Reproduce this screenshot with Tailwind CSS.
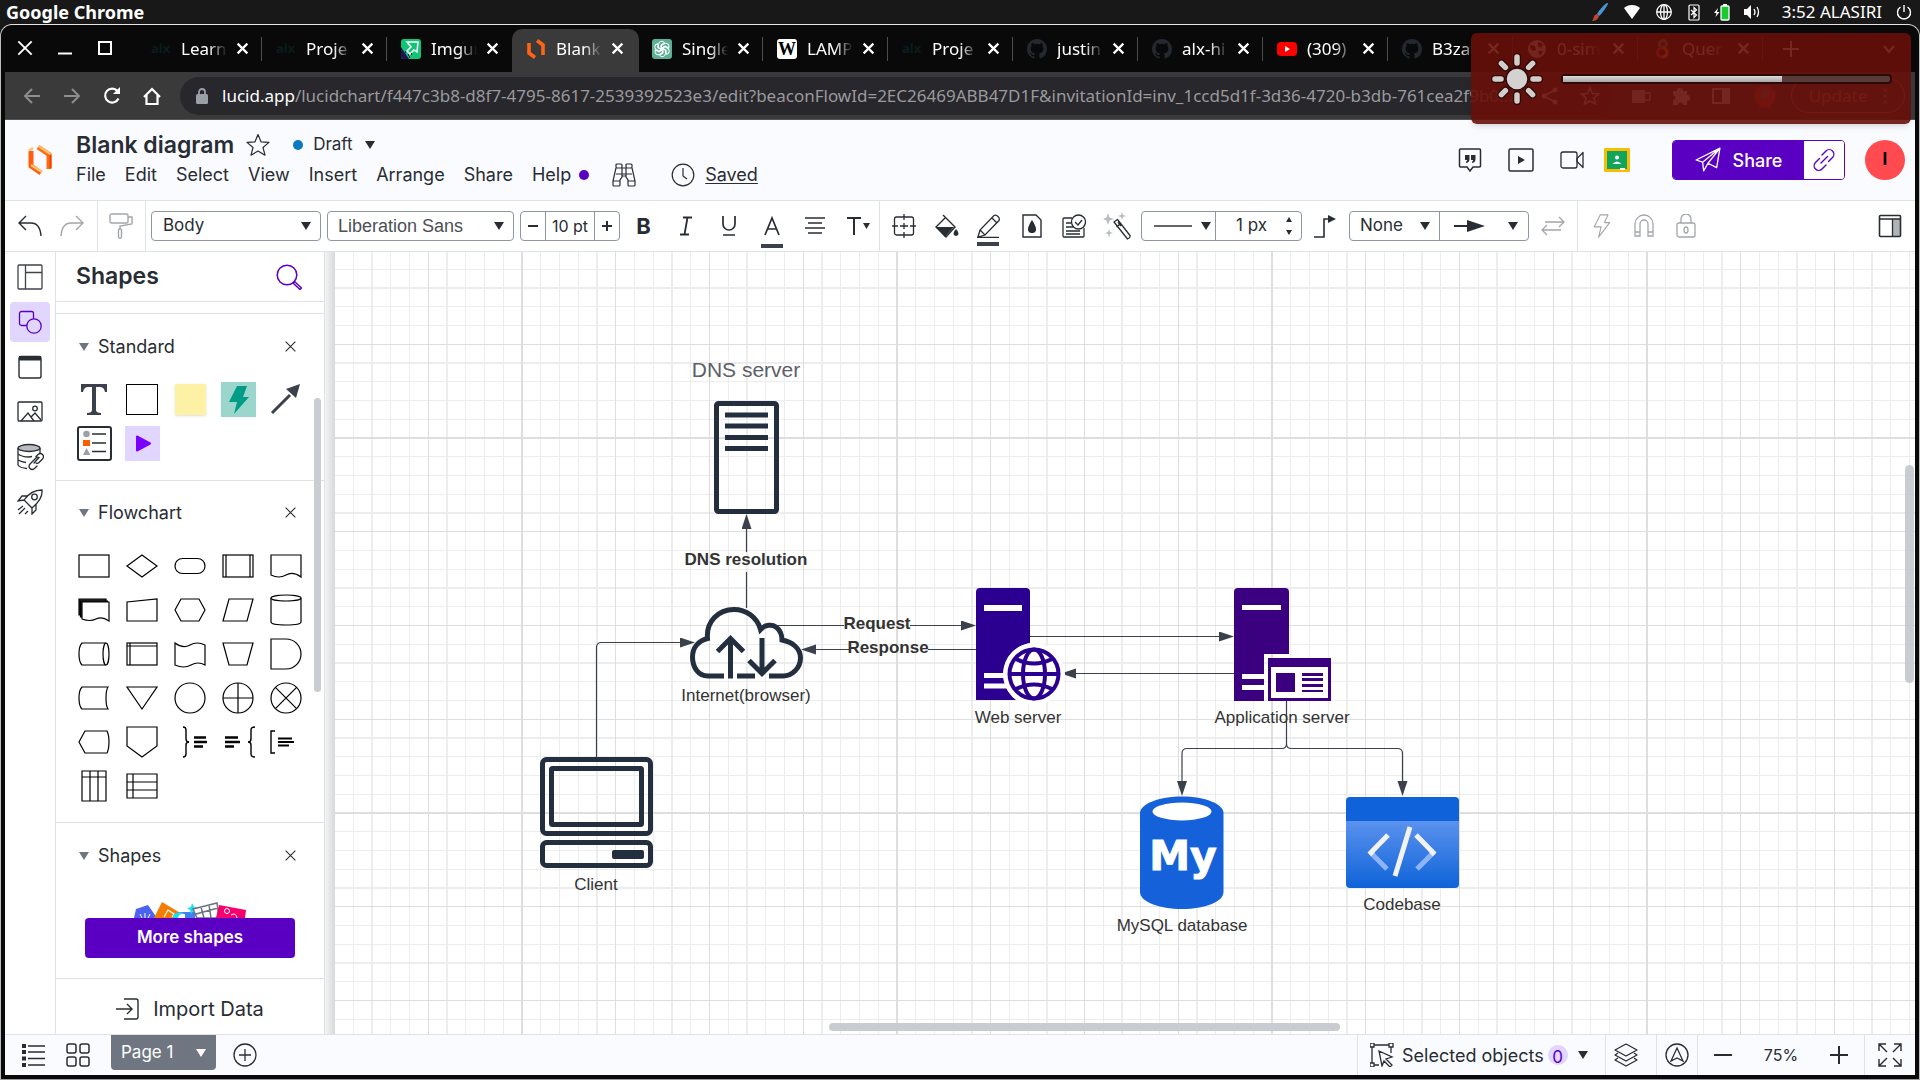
<!DOCTYPE html>
<html lang="en">
<head>
<meta charset="utf-8">
<title>Blank diagram: Lucidchart</title>
<script src="https://cdn.jsdelivr.net/npm/@tailwindcss/browser@4"></script>
</head>
<body class="h-screen overflow-hidden bg-[#181818] font-['Inter',sans-serif] text-[#282c33]">
<svg class="hidden" aria-hidden="true">
  <defs>
    <symbol id="x" viewBox="0 0 12 12"><path d="M1.5 1.5l9 9M10.5 1.5l-9 9" fill="none" stroke="currentColor"/></symbol>
    <symbol id="caret" viewBox="0 0 10 8"><path d="M0 0h10L5 8z" fill="currentColor"/></symbol>
    <symbol id="github" viewBox="0 0 16 16"><path fill="currentColor" d="M8 0C3.58 0 0 3.58 0 8c0 3.54 2.29 6.53 5.47 7.59.4.07.55-.17.55-.38 0-.19-.01-.82-.01-1.49-2.01.37-2.53-.49-2.69-.94-.09-.23-.48-.94-.82-1.13-.28-.15-.68-.52-.01-.53.63-.01 1.08.58 1.23.82.72 1.21 1.87.87 2.33.66.07-.52.28-.87.51-1.07-1.78-.2-3.64-.89-3.64-3.95 0-.87.31-1.59.82-2.15-.08-.2-.36-1.02.08-2.12 0 0 .67-.21 2.2.82a7.6 7.6 0 014 0c1.53-1.04 2.2-.82 2.2-.82.44 1.1.16 1.92.08 2.12.51.56.82 1.27.82 2.15 0 3.07-1.87 3.75-3.65 3.95.29.25.54.73.54 1.48 0 1.07-.01 1.93-.01 2.2 0 .21.15.46.55.38A8 8 0 0016 8c0-4.42-3.58-8-8-8z"/></symbol>
    <symbol id="bolt" viewBox="0 0 20 28"><path d="M8 1h9l-4 9h6L6 27l3-12H1z" fill="none" stroke="currentColor" stroke-linejoin="round" stroke-width="1.3"/></symbol>
  </defs>
</svg>

<div class="flex h-screen flex-col">
  <!-- desktop bar -->
  <header class="flex h-6 shrink-0 items-center justify-between bg-[#181818] px-[6px] font-['Noto_Sans',sans-serif] text-white">
    <span class="text-[18px] leading-6 font-bold">Google Chrome</span>
    <div class="flex items-center gap-3">
      <svg class="h-5 w-5" viewBox="0 0 20 20"><path d="M18 1c1 1-7 12-9 13l-2-2C9 8 16 0 18 1z" fill="#4a94d6"/><path d="M7 12l2 2c-1 4-4 5-7 5 2-2 1-6 5-7z" fill="#c2452f"/></svg>
      <svg class="h-5 w-5" viewBox="0 0 20 20"><path d="M10 17L2 6c4-4 12-4 16 0z" fill="#fff"/></svg>
      <svg class="h-5 w-5" viewBox="0 0 20 20" fill="none" stroke="#fff" stroke-width="1.3"><circle cx="10" cy="10" r="7.3"/><ellipse cx="10" cy="10" rx="3.5" ry="7.3"/><path d="M3 10h14M10 3v14"/></svg>
      <svg class="h-5 w-4" viewBox="0 0 16 20" fill="none" stroke="#fff" stroke-width="1.2"><rect x="3" y="3" width="10" height="15" rx="1"/><path d="M5 8l5.500 5L8 15.500v-10L10.500 8 5 13"/></svg>
      <svg class="h-5 w-4" viewBox="2 0 16 20"><rect x="9" y="4" width="8" height="14" rx="1" fill="#1bcb2e" stroke="#fff" stroke-width="1.3"/><path d="M11 2h4v2h-4z" fill="#fff"/><path d="M6 6l-4 5h2.500l-1 4 4-5H5z" fill="#fff"/></svg>
      <svg class="h-5 w-5" viewBox="0 0 20 20"><path d="M2 7h3l4-4v14l-4-4H2z" fill="#fff"/><path d="M12 7q2 3 0 6M15 5q3 5 0 10" fill="none" stroke="#fff" stroke-width="1.300"/></svg>
      <time class="pl-2 text-[17px] leading-6">3:52 ALASIRI</time>
      <svg class="h-5 w-5" viewBox="0 0 20 20" fill="none" stroke="#fff" stroke-width="1.4"><path d="M6.500 5a6.500 6.500 0 107 0M10 3v7"/></svg>
    </div>
  </header>

  <div class="relative flex min-h-0 flex-1 flex-col rounded-t-xl border-x border-t border-b border-t-[#e4e4e4] border-x-[#bdbdbd] border-b-[#9a9a9a] bg-[#090909]">
    <!-- tab strip -->
    <div class="flex h-[47px] shrink-0 items-stretch overflow-hidden font-['Noto_Sans',sans-serif] text-[17px] text-white">
      <div class="flex w-[136px] shrink-0 items-center gap-5 pb-[2px] pl-[14px]">
        <button aria-label="Close" class="grid h-5 w-5 place-items-center"><svg class="h-4 w-4" viewBox="0 0 12 12" fill="none" stroke="#fff" stroke-width="1.4"><path d="M1 1l10 10M11 1L1 11"/></svg></button>
        <button aria-label="Minimize" class="grid h-5 w-5 place-items-center"><svg class="h-4 w-4" viewBox="0 0 16 16"><path d="M1 13.500h14" stroke="#fff" stroke-width="2"/></svg></button>
        <button aria-label="Maximize" class="grid h-5 w-5 place-items-center"><svg class="h-4 w-4" viewBox="0 0 16 16"><rect x="2" y="2" width="12" height="12" fill="none" stroke="#fff" stroke-width="2"/></svg></button>
      </div>
      <div class="relative flex w-[125px] shrink-0 items-center pl-[14px]"><span class="w-5 text-[13px] font-bold text-[#0b1c1e]">alx</span><span class="ml-[10px] w-[46px] overflow-hidden whitespace-nowrap [mask-image:linear-gradient(90deg,#000_60%,transparent)]">Learn</span><button aria-label="Close tab" class="ml-[9px]"><svg class="h-[13px] w-[13px]" stroke-width="2"><use href="#x"/></svg></button><span class="absolute right-0 h-6 w-px bg-[#4c4c4c]"></span></div>
      <div class="relative flex w-[125px] shrink-0 items-center pl-[14px]"><span class="w-5 text-[13px] font-bold text-[#0b1c1e]">alx</span><span class="ml-[10px] w-[46px] overflow-hidden whitespace-nowrap [mask-image:linear-gradient(90deg,#000_60%,transparent)]">Proje</span><button aria-label="Close tab" class="ml-[9px]"><svg class="h-[13px] w-[13px]" stroke-width="2"><use href="#x"/></svg></button><span class="absolute right-0 h-6 w-px bg-[#4c4c4c]"></span></div>
      <div class="flex w-[125px] shrink-0 items-center pl-[14px]"><svg class="h-5 w-5" viewBox="0 0 20 20"><rect width="20" height="20" rx="3" fill="#12c576"/><path d="M0 8l8 12H3q-3 0-3-3z" fill="#1d1452"/><path d="M6 3l11 0-1 10-3-2-4 4-3-3 4-4z" fill="#12c576" stroke="#fff" stroke-width="1.500"/><path d="M4 13h1m2 3h1m2-1h1m-3 3h1" stroke="#1d1452" stroke-width="2"/></svg><span class="ml-[10px] w-[46px] overflow-hidden whitespace-nowrap [mask-image:linear-gradient(90deg,#000_60%,transparent)]">Imgur</span><button aria-label="Close tab" class="ml-[9px]"><svg class="h-[13px] w-[13px]" stroke-width="2"><use href="#x"/></svg></button></div>
      <div class="mt-1 flex w-[127px] shrink-0 items-center rounded-t-[10px] bg-[#3a3a3a] pb-1 pl-[14px]"><svg class="h-5 w-5" viewBox="0 0 20 20" fill="none" stroke="#ff6414" stroke-width="3.600"><path d="M3 4v10l6 4.500M11 1.500L17 6v10"/></svg><span class="ml-[10px] w-[46px] overflow-hidden whitespace-nowrap [mask-image:linear-gradient(90deg,#000_60%,transparent)]">Blank</span><button aria-label="Close tab" class="ml-[9px]"><svg class="h-[13px] w-[13px]" stroke-width="2"><use href="#x"/></svg></button></div>
      <div class="relative flex w-[124px] shrink-0 items-center pl-[13px]"><svg class="h-5 w-5" viewBox="0 0 20 20" fill="none" stroke="#fff" stroke-width="1"><rect width="20" height="20" rx="3" fill="#5faf97" stroke="none"/><g id="petal"><path id="pt" d="M10 10.500L6.500 8.500V5.500a3.300 3.300 0 016-1.800L9 5.800v4"/><use href="#pt" transform="rotate(60 10 10)"/><use href="#pt" transform="rotate(120 10 10)"/><use href="#pt" transform="rotate(180 10 10)"/><use href="#pt" transform="rotate(240 10 10)"/><use href="#pt" transform="rotate(300 10 10)"/></g></svg><span class="ml-[10px] w-[46px] overflow-hidden whitespace-nowrap [mask-image:linear-gradient(90deg,#000_60%,transparent)]">Single</span><button aria-label="Close tab" class="ml-[9px]"><svg class="h-[13px] w-[13px]" stroke-width="2"><use href="#x"/></svg></button><span class="absolute right-0 h-6 w-px bg-[#4c4c4c]"></span></div>
      <div class="relative flex w-[125px] shrink-0 items-center pl-[14px]"><span class="grid h-5 w-5 place-items-center rounded-[3px] bg-white font-['Liberation_Serif',serif] text-[18px] leading-5 font-bold text-black">W</span><span class="ml-[10px] w-[46px] overflow-hidden whitespace-nowrap [mask-image:linear-gradient(90deg,#000_60%,transparent)]">LAMP</span><button aria-label="Close tab" class="ml-[9px]"><svg class="h-[13px] w-[13px]" stroke-width="2"><use href="#x"/></svg></button><span class="absolute right-0 h-6 w-px bg-[#4c4c4c]"></span></div>
      <div class="relative flex w-[125px] shrink-0 items-center pl-[14px]"><span class="w-5 text-[13px] font-bold text-[#0b1c1e]">alx</span><span class="ml-[10px] w-[46px] overflow-hidden whitespace-nowrap [mask-image:linear-gradient(90deg,#000_60%,transparent)]">Proje</span><button aria-label="Close tab" class="ml-[9px]"><svg class="h-[13px] w-[13px]" stroke-width="2"><use href="#x"/></svg></button><span class="absolute right-0 h-6 w-px bg-[#4c4c4c]"></span></div>
      <div class="relative flex w-[125px] shrink-0 items-center pl-[14px]"><svg class="h-5 w-5 text-[#24292f]"><use href="#github"/></svg><span class="ml-[10px] w-[46px] overflow-hidden whitespace-nowrap [mask-image:linear-gradient(90deg,#000_60%,transparent)]">justin</span><button aria-label="Close tab" class="ml-[9px]"><svg class="h-[13px] w-[13px]" stroke-width="2"><use href="#x"/></svg></button><span class="absolute right-0 h-6 w-px bg-[#4c4c4c]"></span></div>
      <div class="relative flex w-[125px] shrink-0 items-center pl-[14px]"><svg class="h-5 w-5 text-[#24292f]"><use href="#github"/></svg><span class="ml-[10px] w-[46px] overflow-hidden whitespace-nowrap [mask-image:linear-gradient(90deg,#000_60%,transparent)]">alx-hi</span><button aria-label="Close tab" class="ml-[9px]"><svg class="h-[13px] w-[13px]" stroke-width="2"><use href="#x"/></svg></button><span class="absolute right-0 h-6 w-px bg-[#4c4c4c]"></span></div>
      <div class="relative flex w-[125px] shrink-0 items-center pl-[14px]"><svg class="h-5 w-5" viewBox="0 0 20 20"><rect y="3" width="20" height="14" rx="4" fill="#f00"/><path d="M8 7l5 3-5 3z" fill="#fff"/></svg><span class="ml-[10px] w-[46px] overflow-hidden whitespace-nowrap [mask-image:linear-gradient(90deg,#000_60%,transparent)]">(309)</span><button aria-label="Close tab" class="ml-[9px]"><svg class="h-[13px] w-[13px]" stroke-width="2"><use href="#x"/></svg></button><span class="absolute right-0 h-6 w-px bg-[#4c4c4c]"></span></div>
      <div class="relative flex w-[125px] shrink-0 items-center pl-[14px]"><svg class="h-5 w-5 text-[#24292f]"><use href="#github"/></svg><span class="ml-[10px] w-[46px] overflow-hidden whitespace-nowrap [mask-image:linear-gradient(90deg,#000_60%,transparent)]">B3za</span><button aria-label="Close tab" class="ml-[9px]"><svg class="h-[13px] w-[13px]" stroke-width="2"><use href="#x"/></svg></button><span class="absolute right-0 h-6 w-px bg-[#4c4c4c]"></span></div>
      <div class="relative flex w-[125px] shrink-0 items-center pl-[14px]"><svg class="h-5 w-5" viewBox="0 0 20 20"><circle cx="10" cy="10" r="9" fill="#ddd"/><path d="M3 6l5 1 1 4-3 1-3-3zM11 3l5 2-2 4-3-2zM11 12l5 0-3 5z" fill="#111"/></svg><span class="ml-[10px] w-[46px] overflow-hidden whitespace-nowrap [mask-image:linear-gradient(90deg,#000_60%,transparent)]">0-sim</span><button aria-label="Close tab" class="ml-[9px]"><svg class="h-[13px] w-[13px]" stroke-width="2"><use href="#x"/></svg></button><span class="absolute right-0 h-6 w-px bg-[#4c4c4c]"></span></div>
      <div class="relative flex w-[125px] shrink-0 items-center pl-[14px]"><svg class="h-5 w-5" viewBox="0 0 20 20" fill="none" stroke-width="3"><circle cx="11" cy="5" r="3.500" stroke="#37a852"/><path d="M10 9a4.500 4.500 0 100 9" stroke="#d33"/><path d="M10 18a4.500 4.500 0 001-9" stroke="#f5a623"/></svg><span class="ml-[10px] w-[46px] overflow-hidden whitespace-nowrap [mask-image:linear-gradient(90deg,#000_60%,transparent)]">Quer</span><button aria-label="Close tab" class="ml-[9px]"><svg class="h-[13px] w-[13px]" stroke-width="2"><use href="#x"/></svg></button><span class="absolute right-0 h-6 w-px bg-[#4c4c4c]"></span></div>
      <div class="flex flex-1 items-center justify-between pr-[24px] pl-[20px]">
        <button aria-label="New tab"><svg class="h-4 w-4" viewBox="0 0 16 16"><path d="M8 0v16M0 8h16" stroke="#fff" stroke-width="2"/></svg></button>
        <button aria-label="Search tabs"><svg class="h-3 w-3" viewBox="0 0 12 12"><path d="M1 3l5 6 5-6" fill="none" stroke="#fff" stroke-width="2"/></svg></button>
      </div>
    </div>

    <!-- address bar -->
    <div class="mx-1 flex h-12 shrink-0 items-center border-b border-[#555] bg-[#3a3a3a] pr-[10px] pl-[17px] font-['Noto_Sans',sans-serif] text-white">
      <div class="flex w-[158px] shrink-0 items-center gap-5">
        <button aria-label="Back"><svg class="h-5 w-5" viewBox="0 0 20 20" fill="none" stroke="#8d8d8d" stroke-width="2"><path d="M18 10H3M10 3l-7 7 7 7"/></svg></button>
        <button aria-label="Forward"><svg class="h-5 w-5" viewBox="0 0 20 20" fill="none" stroke="#8d8d8d" stroke-width="2"><path d="M2 10h15M10 3l7 7-7 7"/></svg></button>
        <button aria-label="Reload"><svg class="h-5 w-5" viewBox="0 0 20 20" fill="none" stroke="#fff" stroke-width="2.200"><path d="M16.500 12.500A7 7 0 1115.500 5"/><path d="M18 1v7h-7z" fill="#fff" stroke="none"/></svg></button>
        <button aria-label="Home"><svg class="h-5 w-5" viewBox="0 0 20 20" fill="none" stroke="#fff" stroke-width="2.200"><path d="M2 11l8-8 8 8M4.500 9v9h11V9"/></svg></button>
      </div>
      <div class="flex h-[38px] min-w-0 flex-1 items-center rounded-full bg-[#28272c] pr-[12px] pl-[16px]">
        <svg class="h-4 w-3 shrink-0" viewBox="0 0 12 16"><rect y="6" width="12" height="10" rx="1.500" fill="#9aa0a6"/><path d="M3 7V4a3 3 0 016 0v3" fill="none" stroke="#9aa0a6" stroke-width="1.800"/></svg>
        <div role="textbox" aria-label="Address" class="ml-[14px] min-w-0 flex-1 text-[17px] leading-6 whitespace-nowrap text-[#9a9a9d]"><span class="text-white">lucid.app</span>/lucidchart/f447c3b8-d8f7-4795-8617-2539392523e3/edit?beaconFlowId=2EC26469ABB47D1F&amp;invitationId=inv_1ccd5d1f-3d36-4720-b3db-761cea2f9b0...</div>
        <div class="flex items-center gap-5">
          <svg class="h-5 w-5" viewBox="0 0 20 20" fill="#ddd"><circle cx="4" cy="10" r="2.500"/><circle cx="15" cy="4" r="2.500"/><circle cx="15" cy="16" r="2.500"/><path d="M4 10l11-6M4 10l11 6" stroke="#ddd" stroke-width="1.500"/></svg>
          <svg class="h-5 w-5" viewBox="0 0 20 20" fill="none" stroke="#ddd" stroke-width="1.600"><path d="M10 2l2.500 5.500 6 .5-4.500 4 1.500 6-5.500-3-5.500 3L6 12 1.500 8l6-.5z"/></svg>
        </div>
      </div>
      <div class="ml-[19px] flex shrink-0 items-center gap-5">
        <svg class="h-5 w-5" viewBox="0 0 20 20"><path d="M1 4h13v13H1z" fill="#ddd"/><path d="M14 7h5v7h-5" fill="none" stroke="#ddd" stroke-width="1.500"/></svg>
        <svg class="h-5 w-5" viewBox="0 0 20 20"><path d="M2 5h4a3 3 0 116 0h4v4a3 3 0 110 6v4h-4a2 2 0 00-5 0H2v-5a2.500 2.500 0 000-5z" fill="#eee"/></svg>
        <svg class="h-5 w-5" viewBox="0 0 20 20"><rect x="2" y="3" width="16" height="14" fill="none" stroke="#eee" stroke-width="2"/><path d="M11 3h7v14h-7z" fill="#eee"/></svg>
        <svg class="h-7 w-7" viewBox="0 0 24 24"><circle cx="12" cy="12" r="9" fill="#c8382a"/><ellipse cx="12" cy="10" rx="4" ry="5" fill="#777"/><path d="M6 22q6-6 12 0z" fill="#e24"/></svg>
        <button class="-ml-2 flex h-[35px] w-[114px] items-center justify-center gap-4 rounded-full border border-[#e0705c] text-[17px] text-[#e0705c]">Update<svg class="h-4 w-1" viewBox="0 0 4 16" fill="#e0705c"><circle cx="2" cy="2" r="1.500"/><circle cx="2" cy="8" r="1.500"/><circle cx="2" cy="14" r="1.500"/></svg></button>
      </div>
    </div>

    <!-- Lucidchart page -->
    <div class="mx-1 mb-1 flex min-h-0 flex-1 flex-col bg-white">
      <header class="flex h-[81px] shrink-0 items-center border-b border-[#dfe3e9] bg-[#fafbfe] pr-[10px] pl-[23px]">
        <svg class="h-8 w-6" viewBox="0 0 24 32" fill="none"><path d="M3 7v15l10 7" stroke="#ff5d10" stroke-width="5"/><path d="M1 6.500l4-2.500M3 21l11 7" stroke="#ffc56b" stroke-width="2.500"/><path d="M10 3l11 7.500V25" stroke="#ff6a14" stroke-width="5"/><path d="M10.500 2l12 8" stroke="#ffc06a" stroke-width="2.500"/><path d="M22.500 11v13" stroke="#e84600" stroke-width="2"/></svg>
        <div class="ml-6 flex flex-col pb-[2px]">
          <div class="flex h-8 items-center">
            <h1 class="text-[23px] leading-8 font-semibold">Blank diagram</h1>
            <button aria-label="Star" class="ml-3"><svg class="h-6 w-6" viewBox="0 0 24 24"><path d="M12 1.500l3 7.300 8 .6-6 5.100 2 7.700-7-4.200-7 4.200 2-7.700-6-5.100 8-.6z" fill="none" stroke="#282c33" stroke-width="1.200" stroke-linejoin="round"/></svg></button>
            <span class="ml-[23px] h-[10px] w-[10px] rounded-full bg-[#0b78c5]"></span>
            <button class="ml-[10px] flex items-center gap-3 text-[17px]">Draft<svg class="h-[8px] w-[10px]"><use href="#caret"/></svg></button>
          </div>
          <nav class="flex h-7 items-center gap-[19px] text-[18px] leading-7">
            <button>File</button><button>Edit</button><button>Select</button><button>View</button><button>Insert</button><button>Arrange</button><button>Share</button>
            <button class="flex items-center gap-2">Help<span class="h-[10px] w-[10px] rounded-full bg-[#5a00c2]"></span></button>
            <button aria-label="Find" class="ml-1"><svg class="h-6 w-6" viewBox="0 0 24 24" fill="none" stroke="#282c33" stroke-width="1.200"><rect x="4" y="1" width="6" height="4" rx="1"/><rect x="14" y="1" width="6" height="4" rx="1"/><path d="M4 5L1 18v4q0 1 1 1h5q1 0 1-1v-5l2-3V5M20 5l3 13v4q0 1-1 1h-5q-1 0-1-1v-5l-2-3V5M10 5h4M10 13h4M1 18h7M16 18h7M4 11h16"/></svg></button>
            <a href="#saved" class="ml-4 flex items-center gap-[10px]"><svg class="h-6 w-6" viewBox="0 0 24 24" fill="none" stroke="#282c33" stroke-width="1.200"><circle cx="12" cy="12" r="10.800"/><path d="M12 5v8l4 3"/></svg><span class="underline underline-offset-2">Saved</span></a>
          </nav>
        </div>
        <div class="ml-auto flex items-center">
          <div class="flex items-center gap-[26px]">
            <button aria-label="Comments"><svg class="h-6 w-6" viewBox="0 0 24 24" fill="none" stroke="#282c33" stroke-width="1.500"><path d="M2.500 1h19q1 0 1 1v16q0 1-1 1H15l-3 4-3-4H2.500q-1 0-1-1V2q0-1 1-1z"/><g fill="#282c33" stroke="none"><path d="M7 7h4.500v4q0 3-3 4l-.7-1.300q1.300-.5 1.400-1.700H7zM13 7h4.500v4q0 3-3 4l-.7-1.300q1.300-.5 1.400-1.700H13z"/></g></svg></button>
            <button aria-label="Present"><svg class="h-6 w-[26px]" viewBox="0 0 26 24"><rect x="1" y="1" width="24" height="22" rx="1.500" fill="none" stroke="#282c33" stroke-width="1.500"/><path d="M10 8l7 4-7 4z" fill="#282c33"/></svg></button>
            <button aria-label="Video"><svg class="h-6 w-6" viewBox="0 0 24 24" fill="none" stroke="#282c33" stroke-width="1.300"><rect x="1" y="4" width="16" height="16" rx="2"/><path d="M17 10.500l6-6v15l-6-6z" stroke-linejoin="round"/></svg></button>
          </div>
          <button aria-label="Classroom" class="ml-5"><svg class="h-6 w-[26px]" viewBox="0 0 26 24"><rect width="26" height="24" rx="1" fill="#fbbc05"/><rect x="3" y="3" width="20" height="18" fill="#0fa55b"/><circle cx="13" cy="9.500" r="2" fill="#fff"/><path d="M8.500 16q4.500-5 9 0z" fill="#fff"/><path d="M16 20h5v2h-5z" fill="#fff"/></svg></button>
          <div class="ml-[42px] flex h-10 overflow-hidden rounded border border-[#5a00c2]">
            <button class="flex w-[131px] items-center justify-center gap-3 bg-[#5a00c2] text-[18px] font-medium text-white"><svg class="h-[26px] w-[26px]" viewBox="0 0 24 24" fill="none" stroke="#fff" stroke-width="1.200" stroke-linejoin="round"><path d="M1 12L23 1l-3 18-8-4-4 7-1-8zM7 14L23 1 12 15"/></svg>Share</button>
            <button aria-label="Copy link" class="grid w-10 place-items-center bg-white"><svg class="h-6 w-6" viewBox="0 0 24 24" fill="none" stroke="#5a00c2" stroke-width="1.400" stroke-linecap="round"><path d="M9 15L15.500 8.500M10 7l4-4a4.500 4.500 0 016.500 6.500l-4 4M14 17l-4 4a4.500 4.500 0 01-6.500-6.500l4-4"/></svg></button>
          </div>
          <button class="ml-5 grid h-10 w-10 place-items-center rounded-full bg-[#ff4b50] text-[17px] font-bold text-black">I</button>
        </div>
      </header>

      <!-- formatting toolbar -->
      <div class="flex h-[51px] shrink-0 items-stretch border-b border-[#dfe3e9] text-[17px]">
        <div class="flex w-[93px] items-center gap-[18px] border-r border-[#dfe3e9] pl-[13px]">
          <button aria-label="Undo"><svg class="h-6 w-6" viewBox="0 0 24 24" fill="none" stroke="#282c33" stroke-width="1.400"><path d="M8 2L1 9l7 7M1 9h12q9 0 10 13"/></svg></button>
          <button aria-label="Redo"><svg class="h-6 w-6" viewBox="0 0 24 24" fill="none" stroke="#a3a6ab" stroke-width="1.400"><path d="M16 2l7 7-7 7M23 9H11Q2 9 1 22"/></svg></button>
        </div>
        <div class="flex w-12 items-center border-r border-[#dfe3e9] pl-[11px]"><button aria-label="Format painter"><svg class="h-[26px] w-6" viewBox="0 0 24 26" fill="none" stroke="#a3a6ab" stroke-width="1.400"><rect x="1" y="1" width="18" height="9" rx="1.500"/><path d="M19 4h4v7l-12 2v3"/><rect x="9.500" y="16" width="3" height="9" rx="1"/></svg></button></div>
        <div class="flex items-center gap-[6px] pl-[5px]">
          <div class="relative"><select aria-label="Text style" class="h-[30px] w-[170px] appearance-none rounded border border-[#8f96a3] bg-white pl-[11px] text-[17px]"><option>Body</option></select><svg class="pointer-events-none absolute top-[11px] right-[10px] h-[8px] w-[10px]"><use href="#caret"/></svg></div>
          <div class="relative"><select aria-label="Font" class="h-[30px] w-[187px] appearance-none rounded border border-[#8f96a3] bg-white pl-[10px] font-['Liberation_Sans',sans-serif] text-[18px] text-[#4c4f55]"><option>Liberation Sans</option></select><svg class="pointer-events-none absolute top-[11px] right-[10px] h-[8px] w-[10px]"><use href="#caret"/></svg></div>
          <div class="flex h-[30px] w-[100px] items-stretch rounded border border-[#8f96a3]"><button aria-label="Smaller" class="grid w-[24px] place-items-center"><svg class="h-[10px] w-[10px]" viewBox="0 0 10 10"><path d="M0 5h10" stroke="#282c33" stroke-width="2"/></svg></button><input aria-label="Font size" value="10 pt" class="w-[50px] border-x border-[#8f96a3] text-center text-[16px]"><button aria-label="Larger" class="grid flex-1 place-items-center"><svg class="h-[10px] w-[10px]" viewBox="0 0 10 10"><path d="M0 5h10M5 0v10" stroke="#282c33" stroke-width="2"/></svg></button></div>
        </div>
        <div class="ml-[2px] grid w-[258px] grid-cols-6 items-center justify-items-center border-r border-[#dfe3e9]">
          <button class="text-[22px] font-bold">B</button>
          <button aria-label="Italic"><svg class="h-5 w-4" viewBox="0 0 16 20" fill="none" stroke="#282c33" stroke-width="1.800"><path d="M5 1.500h9M2 18.500h9M9.500 1.500l-3 17"/></svg></button>
          <button aria-label="Underline"><svg class="h-5 w-4" viewBox="0 0 16 20" fill="none" stroke="#282c33" stroke-width="1.700"><path d="M2 0v8a6 6 0 0012 0V0M2 19h12"/></svg></button>
          <button aria-label="Text color" class="relative"><svg class="h-5 w-4" viewBox="0 0 16 20" fill="none" stroke="#282c33" stroke-width="1.700"><path d="M1 19L8 2l7 17M4 13h8"/></svg><span class="absolute -bottom-3 -left-[3px] h-1 w-[22px] bg-[#3a414a]"></span></button>
          <button aria-label="Align"><svg class="h-5 w-5" viewBox="0 0 20 20" stroke="#282c33" stroke-width="1.400"><path d="M0 2h20M3 7h14M0 12h20M3 17h14"/></svg></button>
          <button aria-label="Text options"><svg class="h-5 w-6" viewBox="0 0 24 20"><path d="M1 2h14M8 2v17" stroke="#282c33" stroke-width="2"/><path d="M17 7h7l-3.500 6z" fill="#282c33"/></svg></button>
        </div>
        <div class="grid w-[261px] grid-cols-6 items-center justify-items-center px-[3px]">
          <button aria-label="Select area"><svg class="h-6 w-6" viewBox="0 0 24 24" fill="none" stroke="#282c33" stroke-width="1.300"><rect x="2.500" y="3" width="19" height="18" rx="2"/><path d="M12 0v6M12 18v6M0 12h6M18 12h6M8 12h8M12 9v6"/></svg></button>
          <button aria-label="Fill"><svg class="h-6 w-6" viewBox="0 0 24 24" fill="#282c33"><path d="M1 13h18l-9 10z"/><path d="M8 1l12 12-9 10L1 13l9-9" fill="none" stroke="#282c33" stroke-width="1.400"/><path d="M21 15c5 6 1 7 0 7s-5-1 0-7z"/></svg></button>
          <button aria-label="Line color" class="relative"><svg class="h-6 w-6" viewBox="0 0 24 24" fill="none" stroke="#282c33" stroke-width="1.300"><path d="M1 23l2-7L17 1.500q2-1 4 1t1 4L8 21zM3 16l5 5M15 4l5 5M0 23.400h22"/></svg><span class="absolute -bottom-2 left-0 h-1 w-[22px] bg-[#3a414a]"></span></button>
          <button aria-label="Opacity"><svg class="h-6 w-5" viewBox="0 0 20 24"><path d="M1 1h13l5 5v17H1z" fill="none" stroke="#282c33" stroke-width="1.400"/><path d="M10 6c8 12 2 13 0 13s-8-1 0-13z" fill="#282c33"/></svg></button>
          <button aria-label="Tasks"><svg class="h-6 w-6" viewBox="0 0 24 24" fill="none" stroke="#282c33" stroke-width="1.300"><path d="M10 4H2q-1 0-1 1v17q0 1 1 1h19q1 0 1-1v-8M4 9h5M4 13h7M4 17h14M4 20h14"/><circle cx="16.500" cy="8" r="7"/><path d="M13 8l3 3 4-5"/></svg></button>
          <button aria-label="Magic"><svg class="h-7 w-7" viewBox="0 0 28 28"><path d="M5 1l1.500 4.500L11 7 6.500 8.500 5 13 3.500 8.500 0 7l3.500-1.500zM19 0l1 3 3 1-3 1-1 3-1-3-3-1 3-1zM6 17l1 3 3 1-3 1-1 4-1-4-3-1 3-1z" fill="#b8bbc0"/><path d="M11 10l3.500-2.500L27 23.500q.5 2.500-2.500 3.500zM13.500 15l3.500-3M15 10l3 4" fill="none" stroke="#282c33" stroke-width="1.300" stroke-linejoin="round"/></svg></button>
        </div>
        <div class="flex items-center">
          <div class="flex h-[30px] items-stretch rounded border border-[#8f96a3]">
            <button aria-label="Line style" class="flex w-[74px] items-center justify-between border-r border-[#8f96a3] pr-1 pl-[12px]"><span class="h-[2px] w-[38px] bg-[#666]"></span><svg class="h-[8px] w-[10px]"><use href="#caret"/></svg></button>
            <input aria-label="Line width" value="1 px" class="w-[60px] pl-[20px] text-[17px]">
            <button aria-label="Step" class="grid w-[25px] place-items-center"><svg class="h-5 w-2" viewBox="0 0 8 20" fill="#282c33"><path d="M4 1l3 5H1zM4 19l3-5H1z"/></svg></button>
          </div>
          <button aria-label="Line shape" class="ml-[11px]"><svg class="h-6 w-6" viewBox="0 0 24 24"><path d="M1 23h10V5h6" fill="none" stroke="#282c33" stroke-width="1.600"/><path d="M15 1l8 4-8 4z" fill="#282c33"/></svg></button>
          <div class="ml-[12px] flex h-[30px] items-stretch rounded border border-[#8f96a3]">
            <div class="relative"><select aria-label="Line start" class="h-7 w-[90px] appearance-none border-r border-[#8f96a3] pl-[10px] text-[17px]"><option>None</option></select><svg class="pointer-events-none absolute top-[10px] right-[10px] h-[8px] w-[10px]"><use href="#caret"/></svg></div>
            <button aria-label="Line end" class="flex w-[88px] items-center justify-between pr-[10px] pl-[14px]"><svg class="h-4 w-8" viewBox="0 0 32 16"><path d="M0 8h14" stroke="#282c33" stroke-width="2"/><path d="M13 2l18 6-18 6z" fill="#282c33"/></svg><svg class="h-[8px] w-[10px]"><use href="#caret"/></svg></button>
          </div>
          <button aria-label="Swap ends" class="ml-[12px]"><svg class="h-6 w-6" viewBox="0 0 24 24" fill="none" stroke="#a3a6ab" stroke-width="1.300"><path d="M4 8h19M18 3l5 5-5 5M20 16H1M6 11l-5 5 5 5"/></svg></button>
        </div>
        <div class="ml-[12px] flex items-center gap-[22px] border-l border-[#dfe3e9] pl-[14px] text-[#a3a6ab]">
          <button aria-label="Action"><svg class="h-6 w-5"><use href="#bolt"/></svg></button>
          <button aria-label="Magnet"><svg class="h-6 w-5" viewBox="0 0 20 24" fill="none" stroke="currentColor" stroke-width="1.300"><path d="M1 22V10a9 9 0 0118 0v12h-5V10a4 4 0 00-8 0v12zM1 18h5M14 18h5"/></svg></button>
          <button aria-label="Lock"><svg class="h-6 w-5" viewBox="0 0 20 24" fill="none" stroke="currentColor" stroke-width="1.300"><rect x="1" y="9" width="18" height="14" rx="2"/><path d="M5 9V5a5 5 0 0110 0v4"/><ellipse cx="10" cy="16" rx="2" ry="3"/></svg></button>
        </div>
        <button aria-label="Toggle panel" class="mr-[13px] ml-auto"><svg class="h-6 w-6" viewBox="0 0 24 24"><path d="M15 5h7v17h-7z" fill="#b0b3b8"/><rect x="1.500" y="1.500" width="21" height="21" rx="1" fill="none" stroke="#282c33" stroke-width="1.600"/><path d="M1 5h22M14.500 5v17" stroke="#282c33" stroke-width="1.300"/></svg></button>
      </div>

      <div class="flex min-h-0 flex-1">
        <!-- icon rail -->
        <nav class="flex w-[51px] shrink-0 flex-col items-center gap-[5px] border-r border-[#dfe3e9] pt-[5px]">
          <button aria-label="Layout" class="grid h-10 w-10 place-items-center"><svg class="h-[26px] w-[26px]" viewBox="0 0 26 26" fill="none" stroke="#3f434b" stroke-width="1.300"><rect x="1" y="1" width="24" height="24" rx="1"/><path d="M8.500 1v24M8.500 8.500H25"/></svg></button>
          <button aria-label="Shapes" class="grid h-10 w-10 place-items-center rounded bg-[#e1d6ff]"><svg class="h-6 w-6" viewBox="0 0 24 24" stroke="#5a00c2" stroke-width="1.300"><rect x="1.500" y="1.500" width="14" height="14" rx="2" fill="none"/><circle cx="16" cy="16" r="7.200" fill="#e1d6ff"/></svg></button>
          <button aria-label="Containers" class="grid h-10 w-10 place-items-center"><svg class="h-6 w-6" viewBox="0 0 24 24"><rect x="1" y="1.500" width="22" height="21.500" rx="2" fill="none" stroke="#282c33" stroke-width="1.400"/><path d="M1 1h22v4.500H1z" fill="#282c33"/></svg></button>
          <button aria-label="Images" class="grid h-10 w-10 place-items-center"><svg class="h-[26px] w-[26px]" viewBox="0 0 26 26" fill="none" stroke="#282c33" stroke-width="1.300"><rect x="1" y="3" width="24" height="19" rx="1"/><circle cx="18" cy="9.500" r="2.300"/><path d="M4 22l7-8 6 8M14 18l4-4 6 7"/></svg></button>
          <button aria-label="Data" class="grid h-10 w-10 place-items-center"><svg class="h-7 w-7" viewBox="0 0 28 28" fill="none" stroke="#282c33" stroke-width="1.300"><ellipse cx="13" cy="5" rx="11" ry="3.500" fill="#b9bcc2"/><path d="M2 5v17q2 3 9 3.500M24 5v5M2 11q4 3 11 3l3-.5M2 17q4 2 8 2.500"/><g stroke-linecap="round"><path d="M18 20l5-5.500q-1.500-1-3 .5l-6 6q-2 2.500 0 4.500t4.500 0l2.500-2.500M20 20q1.500 1 3-.5l3.500-3.500q2-2.500 0-4.500t-4.500 0l-2 2"/></g></svg></button>
          <button aria-label="Templates" class="grid h-10 w-10 place-items-center"><svg class="h-[26px] w-[26px]" viewBox="0 0 26 26" fill="none" stroke="#282c33" stroke-width="1.300"><path d="M25 1q1 9-10 18l-8-8Q14 1 25 1zM10 7H5l-4 5 6-1M19 15v6l-4 4v-6M1 21l5-4M2 25l6-6M8 25l3-3"/><circle cx="17.500" cy="8" r="2.800"/></svg></button>
        </nav>

        <!-- shape library -->
        <aside class="relative flex w-[269px] shrink-0 flex-col border-r border-[#dfe3e9]">
          <div class="flex h-[50px] shrink-0 items-center justify-between border-b border-[#dfe3e9] pr-[22px] pl-5">
            <h2 class="text-[23px] font-semibold">Shapes</h2>
            <button aria-label="Search shapes"><svg class="h-[26px] w-[26px]" viewBox="0 0 26 26" fill="none" stroke="#5a00c2" stroke-width="1.500"><circle cx="11" cy="11" r="9.800"/><path d="M17 19l1.500-1.500 7 6.500-1.500 1.500z"/></svg></button>
          </div>
          <div class="min-h-0 flex-1 overflow-hidden pt-[11px] text-[17px]">
            <section class="h-[167px] border-t border-[#dfe3e9]">
              <div class="flex h-[65px] items-center pr-[27px] pl-[23px]"><svg class="h-[8px] w-[10px] text-[#6f7682]"><use href="#caret"/></svg><h3 class="ml-[9px] text-[18px] leading-6">Standard</h3><button aria-label="Close Standard" class="ml-auto"><svg class="h-[13px] w-[13px]"><use href="#x"/></svg></button></div>
              <div class="-mt-[2px] ml-[14px] grid w-60 grid-cols-5">
                <span class="grid h-11 place-items-center"><svg class="h-[31px] w-[26px]" viewBox="0 0 26 31"><path d="M0 0h26v8h-2q-1-5-5-5h-4v23q0 3 5 3v2H6v-2q5 0 5-3V3H7Q3 3 2 8H0z" fill="#3a414a"/></svg></span>
                <span class="grid h-11 place-items-center"><span class="h-[31px] w-8 border border-black"></span></span>
                <span class="grid h-11 place-items-center"><span class="h-[31px] w-[31px] bg-[#fdf1a5] shadow-sm"></span></span>
                <span class="grid h-11 place-items-center"><svg class="h-[35px] w-[35px]" viewBox="0 0 35 35"><path d="M0 0h35v35H0z" fill="#9bd6cd"/><path d="M16 4h10l-4 11h6L13 32l3-12H8z" fill="#009c86"/></svg></span>
                <span class="grid h-11 place-items-center"><svg class="h-8 w-8" viewBox="0 0 32 32"><path d="M2 30L20 12" stroke="#3a414a" stroke-width="3"/><path d="M30 1l-4 14-10-9z" fill="#3a414a"/></svg></span>
                <span class="grid h-11 place-items-center"><svg class="h-[35px] w-[35px]" viewBox="0 0 35 35"><rect x="1" y="1" width="33" height="33" rx="2" fill="#fff" stroke="#282c33" stroke-width="2"/><circle cx="9.500" cy="8" r="3.300" fill="#9ba1ab"/><path d="M6 14h7v6H6z" fill="#ff5d00"/><path d="M9.500 22l4 7H6z" fill="#9ba1ab"/><path d="M15 8h14M15 17h14M15 25.500h14" stroke="#282c33" stroke-width="1.300"/></svg></span>
                <span class="grid h-11 place-items-center"><svg class="h-[35px] w-[35px]" viewBox="0 0 35 35"><path d="M0 0h35v35H0z" fill="#e1d6ff"/><path d="M12 10.500v14l13-7z" fill="#7a00ff" stroke="#7a00ff" stroke-width="2" stroke-linejoin="round"/></svg></span>
              </div>
            </section>
            <section class="h-[342px] border-t border-[#dfe3e9]">
              <div class="flex h-[63px] items-center pr-[27px] pl-[23px]"><svg class="h-[8px] w-[10px] text-[#6f7682]"><use href="#caret"/></svg><h3 class="ml-[9px] text-[18px] leading-6">Flowchart</h3><button aria-label="Close Flowchart" class="ml-auto"><svg class="h-[13px] w-[13px]"><use href="#x"/></svg></button></div>
              <div class="ml-[14px] grid w-60 grid-cols-5 justify-items-center text-black [&>svg]:h-11 [&>svg]:w-9">
                <svg viewBox="-18 -22 36 44" fill="none" stroke="#000" stroke-width="1.200"><rect x="-15" y="-11" width="30" height="22"/></svg>
                <svg viewBox="-18 -22 36 44" fill="none" stroke="#000" stroke-width="1.200"><path d="M-15 0L0-11 15 0 0 11z"/></svg>
                <svg viewBox="-18 -22 36 44" fill="none" stroke="#000" stroke-width="1.200"><rect x="-15" y="-7.500" width="30" height="15" rx="7.500"/></svg>
                <svg viewBox="-18 -22 36 44" fill="none" stroke="#000" stroke-width="1.200"><rect x="-15" y="-11" width="30" height="22"/><path d="M-12-11v22M12-11v22"/></svg>
                <svg viewBox="-18 -22 36 44" fill="none" stroke="#000" stroke-width="1.200"><path d="M-15 9v-20h30v22q-8-6-15-2t-15 0z"/></svg>
                <svg viewBox="-18 -22 36 44" fill="#fff" stroke="#000" stroke-width="1.200"><path d="M-15 5v-16h27v16zM-13.500 7v-16h27v16z" fill="#333"/><path d="M-12 9v-17h27v19q-7-5-13-2t-14 0z"/></svg>
                <svg viewBox="-18 -22 36 44" fill="none" stroke="#000" stroke-width="1.200"><path d="M-15 11V-8l30-3v22z"/></svg>
                <svg viewBox="-18 -22 36 44" fill="none" stroke="#000" stroke-width="1.200"><path d="M-15 0l6-11H9l6 11-6 11H-9z"/></svg>
                <svg viewBox="-18 -22 36 44" fill="none" stroke="#000" stroke-width="1.200"><path d="M-15 11l6-22h24l-6 22z"/></svg>
                <svg viewBox="-18 -22 36 44" fill="none" stroke="#000" stroke-width="1.200"><ellipse cy="-12" rx="15" ry="3"/><path d="M-15-12v24q0 3 15 3t15-3v-24"/></svg>
                <svg viewBox="-18 -22 36 44" fill="none" stroke="#000" stroke-width="1.200"><ellipse cx="12" rx="3" ry="11"/><path d="M12-11h-24q-3 3-3 11t3 11h24"/></svg>
                <svg viewBox="-18 -22 36 44" fill="none" stroke="#000" stroke-width="1.200"><rect x="-15" y="-11" width="30" height="22"/><path d="M-12-11v22M-15-8h30"/></svg>
                <svg viewBox="-18 -22 36 44" fill="none" stroke="#000" stroke-width="1.200"><path d="M-15 9v-20q8 6 15 2t15 0v20q-7-4-14 0t-16 0z"/></svg>
                <svg viewBox="-18 -22 36 44" fill="none" stroke="#000" stroke-width="1.200"><path d="M-15-11h30L9 11H-9z"/></svg>
                <svg viewBox="-18 -22 36 44" fill="none" stroke="#000" stroke-width="1.200"><path d="M-15-15H0A15 15 0 010 15h-15z"/></svg>
                <svg viewBox="-18 -22 36 44" fill="none" stroke="#000" stroke-width="1.200"><path d="M14-11h-26q-3 3-3 11t3 11h26q-2-3-2-11t2-11z"/></svg>
                <svg viewBox="-18 -22 36 44" fill="none" stroke="#000" stroke-width="1.200"><path d="M-15-11h30L0 11z"/></svg>
                <svg viewBox="-18 -22 36 44" fill="none" stroke="#000" stroke-width="1.200"><circle r="15"/></svg>
                <svg viewBox="-18 -22 36 44" fill="none" stroke="#000" stroke-width="1.200"><circle r="15"/><path d="M-15 0h30M0-15v30"/></svg>
                <svg viewBox="-18 -22 36 44" fill="none" stroke="#000" stroke-width="1.200"><circle r="15"/><path d="M-10.600-10.600l21.200 21.200M10.600-10.600l-21.200 21.200"/></svg>
                <svg viewBox="-18 -22 36 44" fill="none" stroke="#000" stroke-width="1.200"><path d="M-9-11h22q2 4 2 11t-2 11H-9l-6-11z"/></svg>
                <svg viewBox="-18 -22 36 44" fill="none" stroke="#000" stroke-width="1.200"><path d="M-15-15h30V4L0 15-15 4z"/></svg>
                <svg viewBox="-18 -22 36 44" fill="none" stroke="#000" stroke-width="1.400"><path d="M-7-15q3 0 3 3v9q0 3 3 3-3 0-3 3v9q0 3-3 3"/><path d="M4-4.500h12M4 0h13M4 4.500h9" stroke-width="2.400"/></svg>
                <svg viewBox="-18 -22 36 44" fill="none" stroke="#000" stroke-width="1.400"><path d="M17-15q-4 0-4 3v9q0 3-3 3 3 0 3 3v9q0 3 4 3"/><path d="M-13-4.500h13M-13 0H2M-13 4.500h9" stroke-width="2.400"/></svg>
                <svg viewBox="-18 -22 36 44" fill="none" stroke="#000" stroke-width="1.400"><path d="M-11-11h-4v22h4"/><path d="M-8-3.500h14M-8 0H8M-8 3.500h11" stroke-width="1.800"/></svg>
                <svg viewBox="-18 -22 36 44" fill="none" stroke="#000" stroke-width="1.200"><path d="M-12-15h24v30h-24zM-12-9h24M-4-15v30M4-15v30"/></svg>
                <svg viewBox="-18 -22 36 44" fill="none" stroke="#000" stroke-width="1.200"><path d="M-15-12h30v24h-30zM-9-12v24M-15-4h30M-15 4h30"/></svg>
              </div>
            </section>
            <section class="border-y border-[#dfe3e9]">
              <div class="flex h-[65px] items-center pr-[27px] pl-[23px]"><svg class="h-[8px] w-[10px] text-[#6f7682]"><use href="#caret"/></svg><h3 class="ml-[9px] text-[18px] leading-6">Shapes</h3><button aria-label="Close Shapes" class="ml-auto"><svg class="h-[13px] w-[13px]"><use href="#x"/></svg></button></div>
            </section>
          </div>
          <div class="flex h-[90px] shrink-0 flex-col items-center pt-[14px]">
            <svg class="h-4 w-28" viewBox="0 0 112 16"><path d="M0 16l2-9 12-4 9 13z" fill="#4c62f0"/><path d="M11 16v-5m-3 5l-2-4m8 4l2-4" stroke="#fff"/><path d="M20 16L28 0l20 12-2 4z" fill="#f57c00"/><path d="M30 15l4-7 6 4-2 3" fill="none" stroke="#fff" stroke-width="1.200"/><path d="M39 16q0-6 10-6h12v6z" fill="#3d82ee"/><path d="M39 13q6-5 12 0v3H39z" fill="#13dff5"/><path d="M44 16q1-5 7-4v4z" fill="#fff"/><path d="M58 1l2 4 4 1-4 2-3 4-1-4-3-2 4-1z" fill="#13dff5"/><path d="M59 7l24-6 2 15H63zM62 12l22-6M67 5l3 11M75 3l2 13" fill="#fff" stroke="#6b7280" stroke-width="1.500"/><path d="M85 3l27 5-1 8H82z" fill="#f5006e"/><circle cx="93" cy="9" r="2.500" fill="none" stroke="#fff"/><path d="M97 13q5-3 6 3" fill="none" stroke="#fff"/></svg>
            <button class="h-10 w-[210px] shrink-0 rounded bg-[#5a00c2] text-[17px] font-semibold text-white">More shapes</button>
          </div>
          <button class="flex h-[56px] shrink-0 items-center justify-center gap-[13px] border-t border-[#dfe3e9] pt-1 text-[20px]"><svg class="h-6 w-6" viewBox="0 0 24 24" fill="none" stroke="#282c33" stroke-width="1.400"><path d="M8 2h12q2 0 2 2v16q0 2-2 2H8M0 12h16M11 7l5 5-5 5"/></svg>Import Data</button>
          <span class="absolute top-[146px] right-[3px] h-[294px] w-[7px] rounded-full bg-[#c9ccd1]"></span>
        </aside>
        <div class="w-[10px] shrink-0 bg-linear-to-r from-[#f3f4f6] to-[#d6d8db]"></div>

        <!-- canvas -->
        <main class="relative min-w-0 flex-1 overflow-hidden">
          <svg class="block h-full w-full" role="img" aria-label="Diagram">
            <defs>
              <pattern id="grid" width="375" height="375" patternUnits="userSpaceOnUse" x="521" y="437">
                <g fill="none" shape-rendering="crispEdges">
                  <path stroke="#ededed" d="M19.500 0v375M38.500 0v375M57.500 0v375M113.500 0v375M132.500 0v375M169.500 0v375M207.500 0v375M244.500 0v375M263.500 0v375M319.500 0v375M338.500 0v375M357.500 0v375M0 19.500h375M0 38.500h375M0 57.500h375M0 113.500h375M0 132.500h375M0 169.500h375M0 207.500h375M0 244.500h375M0 263.500h375M0 319.500h375M0 338.500h375M0 357.500h375"/>
                  <path stroke="#ededed" stroke-width="2" d="M76 0v375M151 0v375M226 0v375M301 0v375M0 76h375M0 151h375M0 226h375M0 301h375"/>
                  <path stroke="#dedede" d="M94.500 0v375M188.500 0v375M282.500 0v375M0 94.500h375M0 188.500h375M0 282.500h375"/>
                  <path stroke="#dedede" stroke-width="2" d="M1 0v375M0 1h375"/>
                </g>
              </pattern>
              <linearGradient id="code" x1="0" y1="0" x2="0" y2="1"><stop offset="0" stop-color="#5b92ee"/><stop offset="1" stop-color="#0e63d8"/></linearGradient>
              <marker id="arrow" markerUnits="userSpaceOnUse" markerWidth="16" markerHeight="12" refX="0" refY="5" orient="auto"><path d="M0 0l15 5-15 5z" fill="#3a414a"/></marker>
            </defs>
            <g transform="translate(-335 -252)">
              <rect x="335" y="252" width="4000" height="3000" fill="url(#grid)"/>
              <g fill="none" stroke="#3a414a" stroke-width="1.200">
                <path d="M746.500 608v-36"/><path d="M746.500 552v-23" marker-end="url(#arrow)"/>
                <path d="M596.500 757V647.500q0-5 5-5H680" marker-end="url(#arrow)"/>
                <path d="M778 625.500h66"/><path d="M910 625.500h51" marker-end="url(#arrow)"/>
                <path d="M976 649.500h-48"/><path d="M849 649.500h-33" marker-end="url(#arrow)"/>
                <path d="M1030 636.500h189" marker-end="url(#arrow)"/>
                <path d="M1234 673.500h-158" marker-end="url(#arrow)"/>
                <path d="M1286.500 701v43q0 4.500-5 4.500H1187q-5 0-5 5V781" marker-end="url(#arrow)"/>
                <path d="M1286.500 744q0 4.500 5 4.500h106q5 0 5 5V781" marker-end="url(#arrow)"/>
              </g>
              <g fill="none" stroke="#232f3e" stroke-width="5">
                <rect x="716.500" y="403.500" width="60" height="108" rx="2"/>
                <path d="M725 415h43M725 426h43M725 437.500h43M725 448.500h43"/>
                <path fill="none" d="M724 676H708C698 676 692.500 667 692.500 657C692.500 648 698 641 707.500 638.500C706 622 718 609.500 734 609.500C746 609.500 757 617 760.500 629.500C765 624.500 772 624 776 627C780 630 782 634 782 640C792 642 800.500 648 800.500 658C800.500 668 792 676 783 676H769M737 676h18M730.500 678.500V639M717.500 651.500l13-13 13 13M762 638v35M749 660.500l13 13 13-13"/>
                <rect x="542.500" y="759.500" width="108" height="74" rx="4"/><rect x="551.500" y="768.500" width="90" height="56" rx="1"/><rect x="542.500" y="842.500" width="108" height="23" rx="4"/>
                <rect x="612" y="850" width="32" height="9" rx="2" fill="#232f3e" stroke="none"/>
              </g>
              <g fill="#2b0090">
                <path d="M976 700V592q0-4 4-4h46q4 0 4 4v51a32 32 0 00-14 57z"/>
                <path d="M984 605h38v6h-38zM984 673h20v5h-20zM984 683.500h23v5h-23z" fill="#fff"/>
                <circle cx="1034" cy="674" r="31" fill="#fff"/>
                <g fill="none" stroke="#2b0090" stroke-width="4"><circle cx="1034" cy="674" r="24.500"/><ellipse cx="1034" cy="674" rx="11" ry="24.500"/><path d="M1010 674h48M1016 659q18 9 36 0M1016 689q18-9 36 0"/></g>
              </g>
              <g fill="#3b0080">
                <path d="M1234 701V592q0-4 4-4h47q4 0 4 4v62h-25v47z"/>
                <path d="M1242 605h39v5h-39zM1242 674h22v5h-22zM1242 685h22v5h-22z" fill="#fff"/>
                <path d="M1268 658h63v43h-63z"/><path d="M1271 667h57v31h-57z" fill="#fff"/>
                <path d="M1276 673h19v19h-19zM1302 673h21v3h-21zM1302 678h21v3h-21zM1302 684h21v3h-21zM1302 690h21v2h-21z"/>
              </g>
              <path d="M1140 813c0-9 19-16.500 42-16.500s41.500 7.500 41.500 16.500v79c0 10-19 17-41.500 17s-42-7-42-17z" fill="#1461d9"/>
              <ellipse cx="1182" cy="811.500" rx="29.500" ry="9" fill="#fff"/>
              <path d="M1346 822v-21q0-4 4-4h105q4 0 4 4v21z" fill="#0f62d9"/>
              <path d="M1346 821h113v63q0 4-4 4h-105q-4 0-4-4z" fill="url(#code)"/>
              <g fill="none" stroke="#8db4f7" stroke-width="5"><path d="M1370 852l17 17M1434 852l-17 17"/><path stroke="#f2f2f2" d="M1388 835l-17 17.500 2 2M1416 835l17 17.500-2 2M1410 827l-15 49"/></g>
              <g font-family="'Liberation Sans',sans-serif" font-size="17" text-anchor="middle" fill="#333">
                <text x="746" y="377" font-size="21" fill="#5c6069">DNS server</text>
                <text x="746" y="565" font-weight="700">DNS resolution</text>
                <text x="877" y="629" font-weight="700">Request</text>
                <text x="888" y="653" font-weight="700">Response</text>
                <text x="746" y="701">Internet(browser)</text>
                <text x="1018" y="723">Web server</text>
                <text x="1282" y="723">Application server</text>
                <text x="1182" y="931">MySQL database</text>
                <text x="1402" y="910">Codebase</text>
                <text x="596" y="890">Client</text>
                <text x="1183" y="870" font-family="'DejaVu Sans',sans-serif" font-size="41" font-weight="700" fill="#fff" stroke="#fff">My</text>
              </g>
            </g>
          </svg>
          <span class="absolute bottom-[3px] left-[494px] h-2 w-[511px] rounded-full bg-[#c9ccd1]"></span>
          <span class="absolute top-[213px] right-[1px] h-[218px] w-[9px] rounded-full bg-[#c3c7cd]/90"></span>
        </main>
      </div>

      <!-- status bar -->
      <footer class="flex h-[41px] shrink-0 items-stretch border-t border-[#dfe3e9] bg-[#fafbfe] text-[17px]">
        <button aria-label="Outline" class="ml-4"><svg class="h-6 w-6" viewBox="0 0 24 24" stroke="#282c33" stroke-width="1.400"><path d="M7 3h17M7 9h17M7 15.500h17M7 22h17"/><path d="M1 3h4M1 9h4M1 15.500h4M1 22h4" stroke-width="4"/></svg></button>
        <button aria-label="Page grid" class="ml-[21px]"><svg class="h-6 w-6" viewBox="0 0 24 24" fill="none" stroke="#282c33" stroke-width="1.500"><rect x="1" y="1" width="9" height="9" rx="2"/><rect x="14" y="1" width="9" height="9" rx="2"/><rect x="1" y="14" width="9" height="9" rx="2"/><rect x="14" y="14" width="9" height="9" rx="2"/></svg></button>
        <button class="ml-[21px] flex h-[35px] w-[105px] items-center justify-between rounded-b bg-[#6f7682] pr-[10px] pl-[10px] text-white">Page 1<svg class="h-[8px] w-[10px]"><use href="#caret"/></svg></button>
        <button aria-label="Add page" class="ml-[17px]"><svg class="h-6 w-6" viewBox="0 0 24 24" fill="none" stroke="#282c33" stroke-width="1.300"><circle cx="12" cy="12" r="11"/><path d="M12 6v12M6 12h12"/></svg></button>
        <div class="ml-auto flex w-[248px] items-center border-l border-[#dfe3e9] pl-[12px]">
          <svg class="h-6 w-6 shrink-0" viewBox="0 0 24 24" fill="none" stroke="#282c33" stroke-width="1.300"><path d="M2 22V2h19v8M2 22h7M9 8l13 6-6 2 6 6-2 2-6-6-2 5z"/><path d="M0 0h4v4H0zM19 0h4v4h-4zM0 20h4v4H0z" fill="#fff"/></svg>
          <button class="ml-2 flex items-center text-[18px] whitespace-nowrap">Selected objects<span class="ml-1 grid h-5 w-5 place-items-center rounded-full bg-[#e1d6ff] text-[17px] text-[#5a00c2]">0</span><svg class="ml-[10px] h-[8px] w-[10px]"><use href="#caret"/></svg></button>
        </div>
        <button aria-label="Layers" class="flex w-[51px] items-center border-l border-[#dfe3e9] pl-2"><svg class="h-6 w-6" viewBox="0 0 24 24" fill="none" stroke="#282c33" stroke-width="1.300" stroke-linejoin="round"><path d="M12 1l11 6-11 6L1 7zM4 10l-3 2 11 6 11-6-3-2M4 15l-3 2 11 6 11-6-3-2"/></svg></button>
        <button aria-label="Navigate" class="grid w-[41px] place-items-center border-l border-[#dfe3e9]"><svg class="h-6 w-6" viewBox="0 0 24 24" fill="none" stroke="#282c33" stroke-width="1.300"><circle cx="12" cy="12" r="11"/><path d="M12 5l6 13-6-3-6 3z"/></svg></button>
        <div class="flex w-[168px] items-center justify-between border-x border-[#dfe3e9] px-4">
          <button aria-label="Zoom out"><svg class="h-[18px] w-[18px]" viewBox="0 0 18 18"><path d="M0 9h18" stroke="#282c33" stroke-width="2"/></svg></button>
          <span class="text-[16px]">75%</span>
          <button aria-label="Zoom in"><svg class="h-[18px] w-[18px]" viewBox="0 0 18 18"><path d="M0 9h18M9 0v18" stroke="#282c33" stroke-width="2"/></svg></button>
        </div>
        <button aria-label="Full screen" class="grid w-[50px] place-items-center"><svg class="h-6 w-6" viewBox="0 0 24 24" fill="none" stroke="#282c33" stroke-width="1.400"><path d="M1 8V1h7M1 1l8 8M16 1h7v7M23 1l-8 8M1 16v7h7M1 23l8-8M16 23h7v-7M23 23l-8-8"/></svg></button>
      </footer>
    </div>
  </div>
</div>

<!-- brightness indicator -->
<div role="status" class="fixed top-[33px] right-[9px] flex h-[91px] w-[440px] items-center rounded-md bg-[#68100a]/90 pr-[19px] pl-5 shadow-md">
  <svg class="h-[52px] w-[52px] shrink-0" viewBox="-26 -26 52 52"><g stroke="#2c0a07" stroke-width="8" stroke-linecap="round"><path d="M0-22v6M0 22v-6M-22 0h6M22 0h-6M-15.600-15.600l4 4M15.600-15.600l-4 4M-15.600 15.600l4-4M15.600 15.600l-4-4"/></g><g stroke="#d2cccb" stroke-width="5.500" stroke-linecap="round"><path d="M0-22v6M0 22v-6M-22 0h6M22 0h-6M-15.600-15.600l4 4M15.600-15.600l-4 4M-15.600 15.600l4-4M15.600 15.600l-4-4"/></g><circle r="11" fill="#d4d1d0" stroke="#2c0a07" stroke-width="1.500"/></svg>
  <div class="ml-[18px] h-[10px] flex-1 rounded-sm border-2 border-[#2c0a07] bg-[#593c3a]"><div class="h-full bg-linear-to-b from-[#dcdcdc] to-[#a9a5a4]" style="width:67%"></div></div>
</div>
</body>
</html>
